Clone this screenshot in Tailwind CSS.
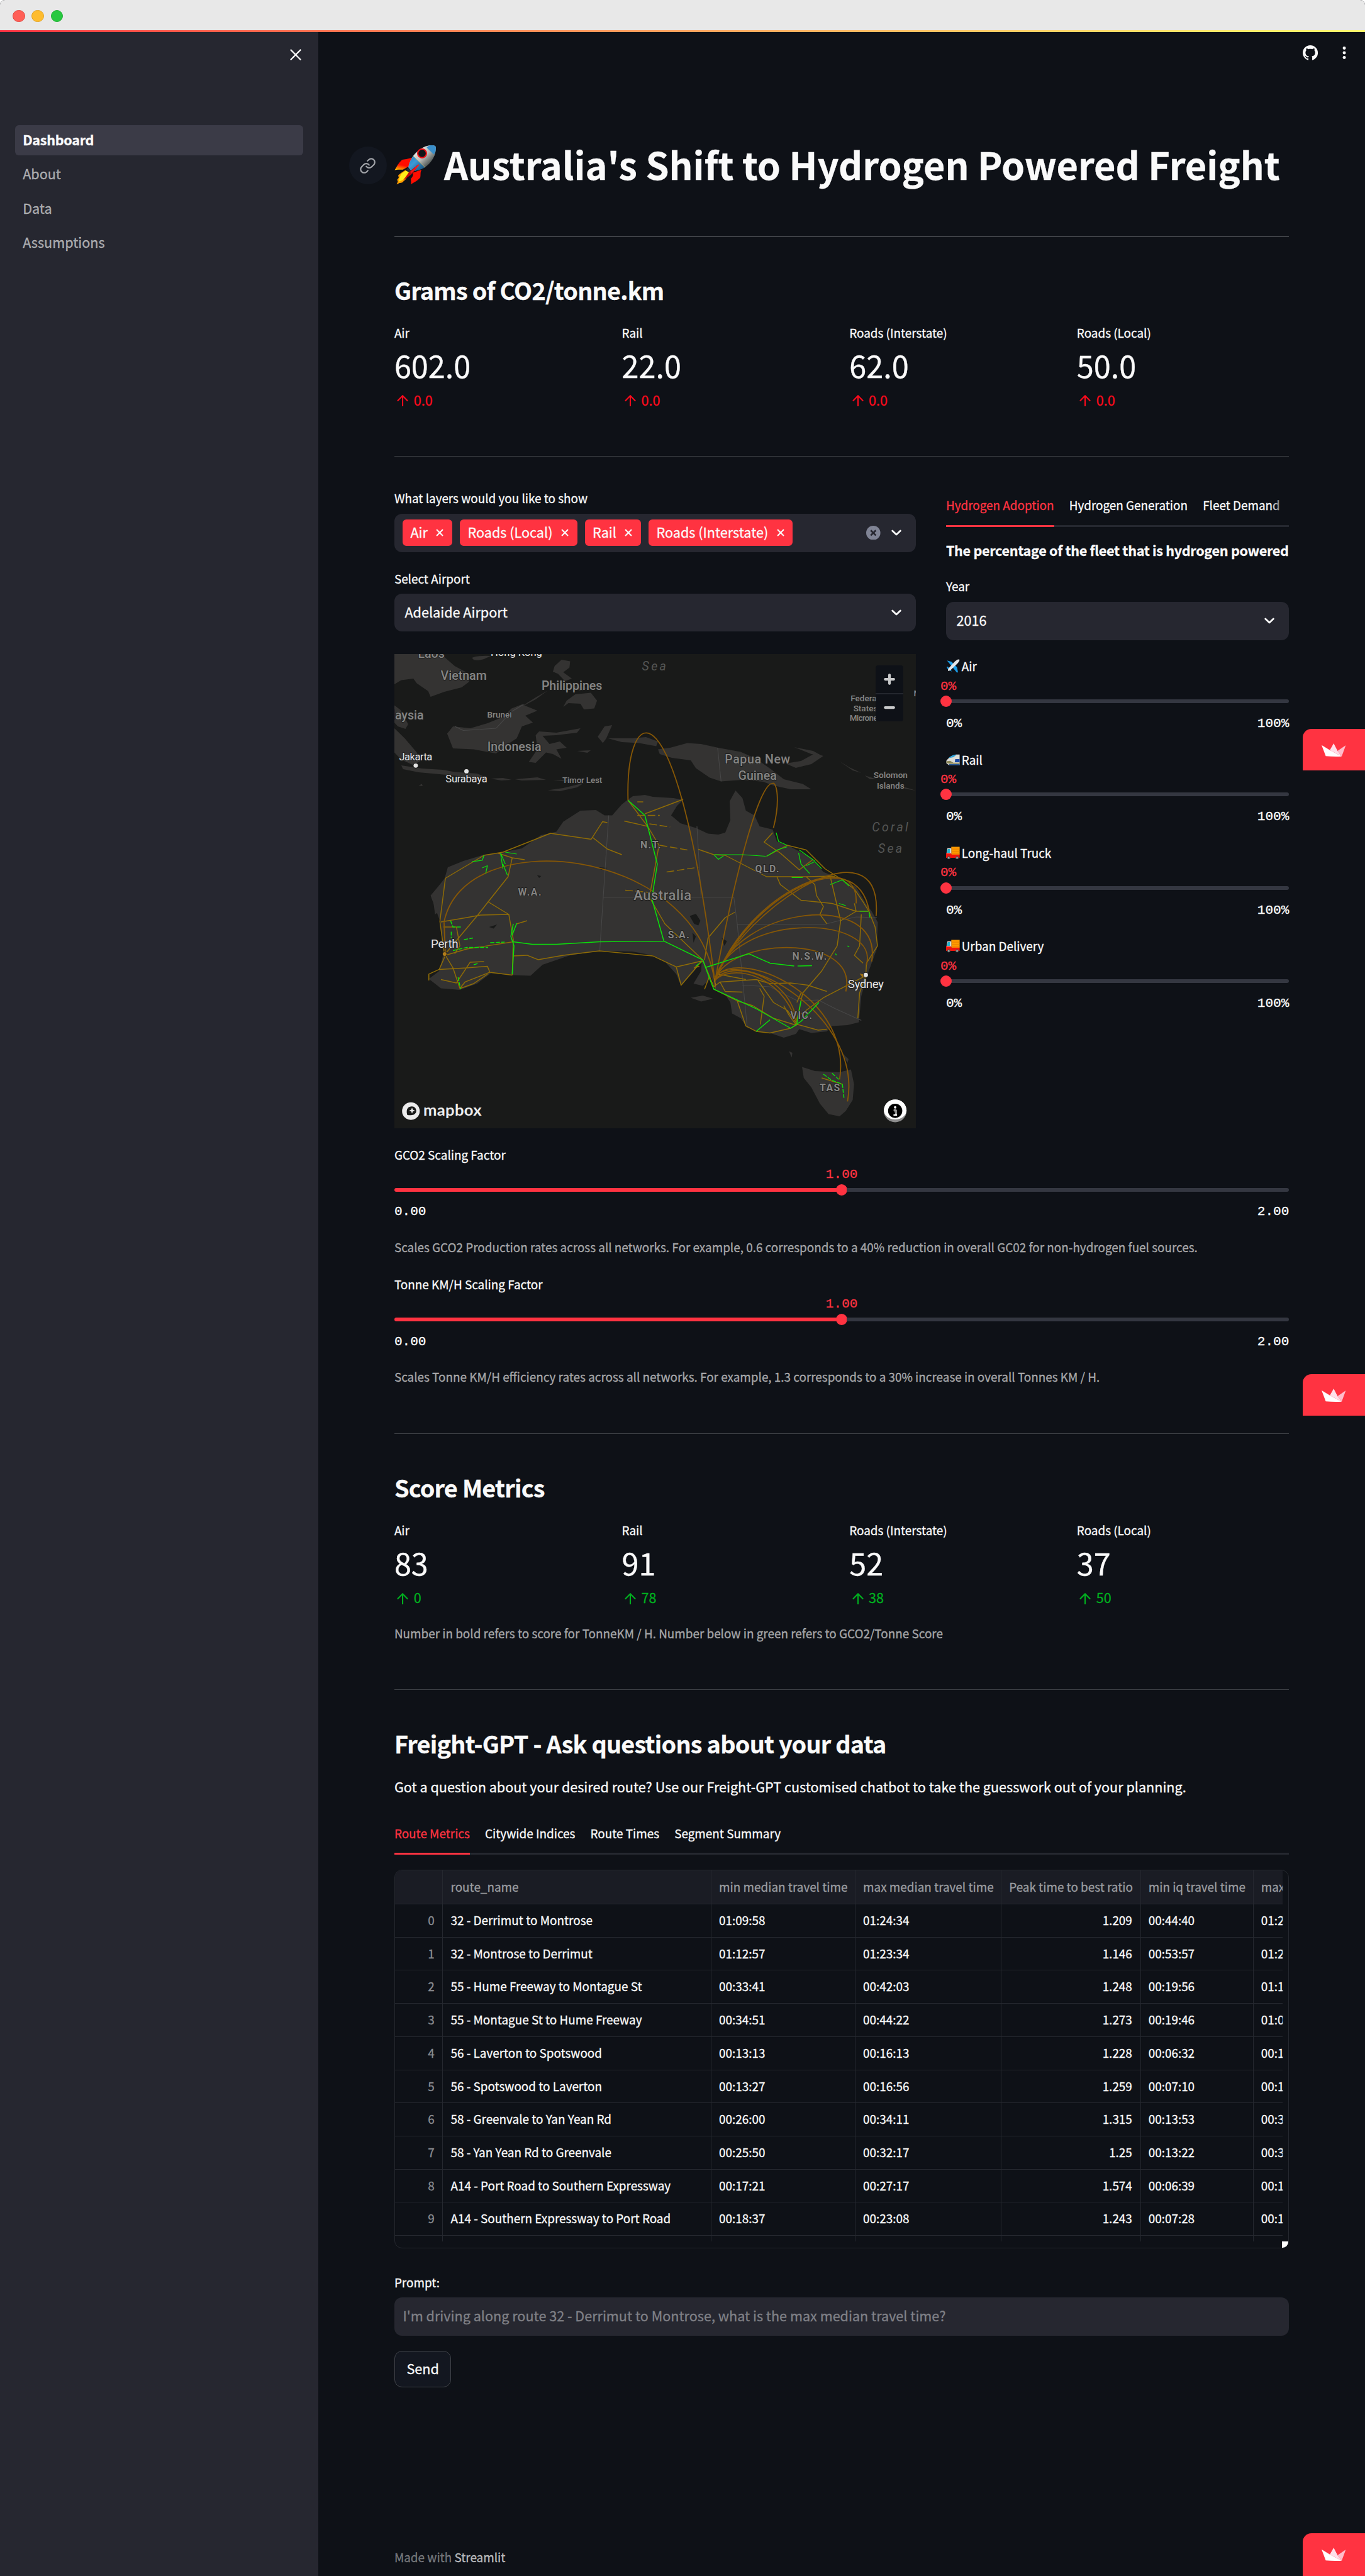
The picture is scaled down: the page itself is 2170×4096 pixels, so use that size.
<!DOCTYPE html>
<html lang="en" class="[--spacing:1.50694px]">
<head>
<meta charset="utf-8">
<title>Australia's Shift to Hydrogen Powered Freight</title>
<script src="https://cdn.jsdelivr.net/npm/@tailwindcss/browser@4"></script>
</head>
<body class="w-[2170px] h-[4096px] overflow-hidden bg-white font-['Noto_Sans_CJK_SC','Noto_Sans',sans-serif] text-[#fafafa] text-[18.9px] [-webkit-text-stroke:0.3px]">
<svg class="hidden">
  <symbol id="arrow" viewBox="0 0 12 12"><path d="M6 11.6V.9M1 6L6 .9l5 5.1" fill="none" stroke="currentColor" stroke-width="1.4" stroke-linecap="round" stroke-linejoin="round"/></symbol>
  <symbol id="chev" viewBox="0 0 12 8"><path d="M1.8 2L6 6l4.200-4" fill="none" stroke="#fafafa" stroke-width="1.9" stroke-linecap="round" stroke-linejoin="round"/></symbol>
  <symbol id="x" viewBox="0 0 8 8"><path d="M.7.7l6.600 6.600M7.300.7L.7 7.300" fill="none" stroke="#fafafa" stroke-width="1.4"/></symbol>
  <symbol id="crown" viewBox="0 0 25.600 14"><path d="M0 1.800L8.750 7.100 21.300 13.800Q13 14.200 4.400 13.500Z" fill="#fff"/><path d="M12.800 0L8.750 7.100 21.300 13.800 16.900 8Z" fill="#ffe0ea"/><path d="M25.600 2L16.900 8 21.300 13.800Z" fill="#ffbccb"/></symbol>
  <symbol id="truck" viewBox="0 0 15 15"><rect x="5.700" y="1" width="9.200" height="9" fill="#ff9a00"/><path d="M5.700 3.500h9.200M5.700 6h9.200M5.700 8.300h9.200" stroke="#e07800" stroke-width=".5"/><path d="M.3 9L1.500 2.600h4.200V9Z" fill="#e9e4e0"/><path d="M.9 7.500L1.900 3.500h2.500v4Z" fill="#25b5cf"/><path d="M0 8h5.700v1.500h9.200V13H0Z" fill="#f0140c"/><circle cx="3" cy="13" r="1.700" fill="#555"/><circle cx="12" cy="13" r="1.700" fill="#555"/><circle cx="3" cy="13" r=".7" fill="#ddd"/><circle cx="12" cy="13" r=".7" fill="#ddd"/></symbol>
</svg>

<div class="relative flex h-full w-full flex-col overflow-hidden rounded-t-[8px] bg-[#0e1117]">
  <header class="flex h-32 shrink-0 items-center gap-7 bg-[#e8e8e8] pl-13.5 pt-2">
    <span class="size-13 rounded-full border border-[#e2463f] bg-[#ff5f57]"></span>
    <span class="size-13 rounded-full border border-[#e1a325] bg-[#febc2e]"></span>
    <span class="size-13 rounded-full border border-[#1dad2f] bg-[#28c840]"></span>
  </header>
  <div class="absolute inset-x-0 top-32 z-10 h-2 bg-linear-to-r from-[#ff3142] via-[#ffa25c] to-[#fffb6a]"></div>

  <div class="flex min-h-0 flex-1">
    <aside class="w-336 shrink-0 bg-[#262730]">
      <div class="flex justify-end pr-18 pt-20">
        <svg class="size-12" viewBox="0 0 12 12"><path d="M.6.6l10.800 10.800M11.400.6L.6 11.400" stroke="#fafafa" stroke-width="1.500"/></svg>
      </div>
      <nav class="mx-16 mt-68 flex flex-col gap-4 text-[21.6px] text-[#fafafa]/60">
        <a class="flex h-32 items-center rounded-[6px] bg-[#3b3b47] px-8 pb-1 font-bold tracking-[-0.3px] text-[#fafafa]">Dashboard</a>
        <a class="flex h-32 items-center px-8 pb-1">About</a>
        <a class="flex h-32 items-center px-8 pb-1">Data</a>
        <a class="flex h-32 items-center px-8 pb-1">Assumptions</a>
      </nav>
    </aside>

    <main class="w-1104 shrink-0">
      <div class="flex h-48 items-center justify-end gap-20 pr-14">
        <svg class="size-16" viewBox="0 0 16 16"><path fill="#fafafa" d="M8 0C3.580 0 0 3.580 0 8c0 3.540 2.290 6.530 5.470 7.590.4.070.55-.17.55-.38 0-.19-.01-.82-.01-1.490-2.010.37-2.530-.49-2.690-.94-.09-.23-.48-.94-.82-1.130-.28-.15-.68-.52-.01-.53.63-.01 1.080.58 1.230.82.72 1.210 1.870.87 2.330.66.070-.52.28-.87.51-1.070-1.780-.2-3.640-.89-3.640-3.950 0-.87.31-1.590.82-2.150-.08-.2-.36-1.020.08-2.120 0 0 .67-.21 2.200.82.64-.18 1.320-.27 2-.27s1.360.09 2 .27c1.530-1.040 2.200-.82 2.200-.82.44 1.100.16 1.920.08 2.120.51.56.82 1.270.82 2.150 0 3.070-1.870 3.750-3.650 3.950.29.25.54.73.54 1.480 0 1.070-.01 1.930-.01 2.200 0 .21.15.46.55.38A8.010 8.010 0 0016 8c0-4.420-3.580-8-8-8z"/></svg>
        <svg class="size-16" viewBox="0 0 16 16" fill="#fafafa"><circle cx="8" cy="3" r="1.650"/><circle cx="8" cy="8" r="1.650"/><circle cx="8" cy="13" r="1.650"/></svg>
      </div>

      <div class="ml-80 w-944">
        <div class="relative mt-66.75 flex h-52 gap-8.5">
          <div class="absolute -left-48 top-8 flex size-40 items-center justify-center rounded-full bg-[#131720]">
            <svg class="size-18" viewBox="0 0 24 24" fill="none" stroke="#a3a5aa" stroke-width="1.900" stroke-linecap="round" stroke-linejoin="round"><path d="M10 13a5 5 0 0 0 7.540.54l3-3a5 5 0 0 0-7.070-7.070l-1.720 1.710"/><path d="M14 11a5 5 0 0 0-7.540-.54l-3 3a5 5 0 0 0 7.070 7.070l1.710-1.710"/></svg>
          </div>
          <svg class="mt-6 size-44" viewBox="0 0 44 44">
            <defs>
              <linearGradient id="rk" x1=".2" y1=".2" x2=".75" y2=".75"><stop offset="0" stop-color="#f4f4f0"/><stop offset=".55" stop-color="#b9bcb8"/><stop offset="1" stop-color="#4b5250"/></linearGradient>
              <linearGradient id="bl" x1="0" y1="0" x2="1" y2="1"><stop offset="0" stop-color="#1d7fc0"/><stop offset=".4" stop-color="#3d9ad6"/><stop offset="1" stop-color="#0d3f66"/></linearGradient>
              <linearGradient id="fn" x1=".6" y1="0" x2=".3" y2="1"><stop offset=".6" stop-color="#ff0d00"/><stop offset="1" stop-color="#ffb300"/></linearGradient>
            </defs>
            <path d="M18.500 13.600C14 15.500 11 15.300 8.200 15.900 4.500 19 2.500 23 .3 26.900 3.500 26 6 26.600 9 26.400L15 23Z" fill="url(#fn)"/>
            <path d="M19.800 29.500L28.700 26.400C27 29.500 28 31 27.300 34.750 24 38.500 20.500 40 17.300 41.900 18 39.500 17.300 38 17.300 35.900 19.500 34 19.800 32 19.800 29.500Z" fill="#ff0d00"/>
            <path d="M11.500 26.900L6.800 30 4 32.300 4.600 35 2.900 37 3.600 39 2.300 41.900 5 40.700 8.200 40 12 36.500 16.200 30Z" fill="#ff9d00"/>
            <path d="M12 27.400L7 31 5.300 35.500 4.600 39 8.500 37.500 12.500 33.500 15.800 29.500Z" fill="#ffee1a"/>
            <path d="M14.300 24.200L18.500 28.200 16 30 12.500 26.500Z" fill="#1f3038"/>
            <path d="M38.200.6C32 1 24.500 5.500 19.800 11.900 17.500 15.500 15.500 19.500 14.800 23.900L18.200 28.100C23.500 27.500 28 26.500 32.300 23.900 37 20.500 40.500 16 42.300 11.400 43.500 8 44 5 43.600 2.200 43 .8 41 .5 38.200.6Z" fill="url(#rk)"/>
            <path d="M19.800 11.900C17.500 15.500 15.500 19.500 14.800 23.900L18.200 28.100C23.500 27.500 28 26.500 32.300 23.900Z" fill="url(#bl)"/>
            <path d="M38.200.6C36.500.8 35 1.700 34 3.100L41.500 10.300C43.500 8 44 5 43.600 2.200 43 .8 41 .5 38.200.6Z" fill="#3a8fca"/>
            <path d="M19.800 11.900L32.300 23.900" stroke="#d9b95c" stroke-width=".5"/>
            <circle cx="29.200" cy="9.250" r="5.300" fill="#ee0f14"/><circle cx="29.200" cy="9.250" r="3.900" fill="#101416"/>
            <path d="M25.900 21.200L24.300 21.600 15.500 28.800 9.300 37.800 19 30.500Z" fill="#c2070c"/><path d="M25.900 21.200L17.500 29.500" stroke="#ff1c1c" stroke-width="1.200"/>
          </svg>
          <h1 class="whitespace-nowrap text-[59.37px] font-bold leading-[78px]">Australia's Shift to Hydrogen Powered Freight</h1>
        </div>
        <div class="mt-50.25 h-1 bg-[#3d4045]"></div>

        <h2 class="mt-38.75 h-34 text-[37.78px] font-bold leading-[51px] tracking-[-0.75px]">Grams of CO2/tonne.km</h2>
        <div class="mt-17.25 grid grid-cols-4 gap-16">
          <div><div class="h-22 leading-[33px]">Air</div><div class="mt-0.75 h-44 text-[48.6px] leading-[66px]">602.0</div><div class="mt-3.25 flex h-24 items-center pl-3 text-[21.6px] leading-[36px] text-[#ff0a1c]"><svg class="mr-5.5 mt-2 size-12"><use href="#arrow"/></svg>0.0</div></div>
          <div><div class="h-22 leading-[33px]">Rail</div><div class="mt-0.75 h-44 text-[48.6px] leading-[66px]">22.0</div><div class="mt-3.25 flex h-24 items-center pl-3 text-[21.6px] leading-[36px] text-[#ff0a1c]"><svg class="mr-5.5 mt-2 size-12"><use href="#arrow"/></svg>0.0</div></div>
          <div><div class="h-22 leading-[33px]">Roads (Interstate)</div><div class="mt-0.75 h-44 text-[48.6px] leading-[66px]">62.0</div><div class="mt-3.25 flex h-24 items-center pl-3 text-[21.6px] leading-[36px] text-[#ff0a1c]"><svg class="mr-5.5 mt-2 size-12"><use href="#arrow"/></svg>0.0</div></div>
          <div><div class="h-22 leading-[33px]">Roads (Local)</div><div class="mt-0.75 h-44 text-[48.6px] leading-[66px]">50.0</div><div class="mt-3.25 flex h-24 items-center pl-3 text-[21.6px] leading-[36px] text-[#ff0a1c]"><svg class="mr-5.5 mt-2 size-12"><use href="#arrow"/></svg>0.0</div></div>
        </div>
        <div class="mt-47 h-1 bg-[#3d4045]"></div>

        <div class="flex gap-32">
          <section class="w-550 shrink-0">
            <div class="mt-32.5 h-22 leading-[33px]">What layers would you like to show</div>
            <div class="mt-5.5 flex h-40.5 items-center rounded-[12px] bg-[#262730] pl-8.75 text-[21.6px]">
              <div class="flex gap-8">
                <span class="flex h-28 items-center rounded-[6px] bg-[#ff3341] pl-8.25 pr-9"><span class="-mt-1.5 mr-9">Air</span><svg class="size-8"><use href="#x"/></svg></span>
                <span class="flex h-28 items-center rounded-[6px] bg-[#ff3341] pl-8.25 pr-9"><span class="-mt-1.5 mr-9">Roads (Local)</span><svg class="size-8"><use href="#x"/></svg></span>
                <span class="flex h-28 items-center rounded-[6px] bg-[#ff3341] pl-8.25 pr-9"><span class="-mt-1.5 mr-9">Rail</span><svg class="size-8"><use href="#x"/></svg></span>
                <span class="flex h-28 items-center rounded-[6px] bg-[#ff3341] pl-8.25 pr-9"><span class="-mt-1.5 mr-9">Roads (Interstate)</span><svg class="size-8"><use href="#x"/></svg></span>
              </div>
              <svg class="ml-auto size-15" viewBox="0 0 15 15"><circle cx="7.500" cy="7.500" r="7.500" fill="#808495"/><path d="M4.800 4.800l5.400 5.400M10.200 4.800l-5.400 5.400" stroke="#262730" stroke-width="1.800"/></svg>
              <svg class="ml-10.5 mr-14.5 h-8 w-12"><use href="#chev"/></svg>
            </div>
            <div class="mt-16.5 h-22 leading-[33px]">Select Airport</div>
            <div class="mt-5.5 flex h-40 items-center justify-between rounded-[12px] bg-[#262730] pl-11 pr-14.5 text-[21.6px]"><span class="-mt-1.5">Adelaide Airport</span><svg class="h-8 w-12"><use href="#chev"/></svg></div>

            <div class="relative mt-24 h-500 w-550 overflow-hidden bg-[#191a19]">
              <svg class="absolute inset-0 h-full w-full" viewBox="30 32 1513 1507" preserveAspectRatio="none">
                <g fill="#343332">
                  <path d="M30 32H165L205 70 242 92 247 120 225 138 175 152 135 168 128 150 95 125 85 110 50 115 30 128Z"/>
                  <path d="M255 44Q270 36 310 38L290 48Q268 54 260 50Z"/>
                  <path d="M495 70L515 50 540 55 538 75 520 90 545 110 525 118 505 95 490 88ZM555 160L600 155 618 180 610 205 580 208 570 190 535 188 520 200 530 180ZM540 130L560 135 590 140 570 150ZM385 208L440 170 475 148 440 176Z"/>
                  <path d="M183 285L200 262 250 268 300 252 345 232 370 205 400 192 445 212 410 228 432 250 400 262 385 300 360 318 325 348 260 335 200 332Z"/>
                  <path d="M440 290L450 278 500 282 570 268 560 282 500 290 460 292 480 318 510 310 530 330 500 335 515 365 490 350 470 345 440 378 420 375 445 335Z"/>
                  <path d="M30 268L60 300 95 345 105 372 85 385 50 368 30 345ZM30 195L48 210 70 255 62 270 40 262 30 250Z"/>
                  <path d="M50 386L110 396 170 400 205 407 270 412 300 426 250 424 180 416 100 408 55 398ZM310 428L345 426 370 432 340 434ZM380 430L445 424 470 432 400 434ZM475 465L520 458 580 442 560 456 510 468ZM490 434L550 432 540 438Z"/>
                  <path d="M620 295L640 262 662 258 655 275 645 300 635 315ZM650 300L720 300 760 296 795 310 790 325 740 315 690 312ZM560 340L600 338 590 346Z"/>
                  <path d="M795 335L830 330 880 315 920 318 970 330 1035 343 1080 365 1125 400 1160 430 1215 445 1240 462 1180 462 1130 450 1100 438 1040 432 978 437 945 425 905 395 890 370 835 362 800 350Z"/>
                  <path d="M1165 380L1210 372 1250 348 1275 356 1240 382 1195 394ZM1190 328L1245 340 1270 355 1240 350ZM1320 372L1350 392 1385 410 1360 402ZM1395 418L1430 430 1410 430ZM1490 450L1520 458 1543 466 1510 460ZM100 450L110 445 112 452Z"/>
                  <path d="M705 497L722 484 757 480 780 486 840 490 868 496 850 515 833 545 860 570 905 585 940 603 970 606 990 600 1005 560 1003 500 1020 466 1040 490 1050 530 1075 545 1090 580 1128 590 1140 628 1180 645 1240 680 1275 725 1320 745 1370 772 1398 825 1415 850 1433 885 1430 970 1415 1015 1400 1060 1385 1120 1378 1203 1345 1212 1300 1215 1285 1232 1240 1237 1205 1225 1195 1240 1160 1252 1120 1237 1080 1232 1050 1215 1035 1190 1010 1175 1005 1140 990 1115 960 1100 950 1060 925 1087 898 1080 920 1040 922 1008 900 1040 862 1087 848 1050 815 1010 780 990 720 978 625 976 540 990 460 1020 425 1055 372 1053 310 1047 270 1080 220 1100 165 1095 130 1065 160 1040 172 985 162 880 135 800 158 770 176 745 185 710 230 690 290 670 330 665 400 650 455 608 500 597 520 565 570 530 615 528 640 545 662 545 690 510Z"/>
                  <path d="M1213 1345L1250 1358 1320 1362 1355 1353 1364 1400 1360 1450 1340 1485 1322 1502 1290 1495 1265 1462 1240 1410 1218 1380ZM890 1125L925 1118 955 1128 920 1137ZM1330 1302L1348 1320 1345 1332ZM1175 1295L1185 1300 1183 1315ZM140 795L160 850 148 860Z"/>
                </g>
                <path d="M887 865L905 858 918 880 912 895 900 890ZM980 935L995 945 988 960ZM622 710L648 712 630 718ZM305 900L328 892 318 905ZM444 735L456 738 450 744ZM895 918L905 930 898 950Z" fill="#191a19"/>
                <g fill="none" stroke="#474747" stroke-width="2"><path d="M652 545L636 805 626 976M636 805H1015L1025 891 1054 1220M908 580L920 805M1025 891H1280L1320 880 1370 868 1430 870M1040 1085L1120 1090 1200 1135 1260 1132 1310 1160 1385 1197M968 330L978 437M205 262L230 275 325 268 370 215 405 192"/></g>
                <g fill="none" stroke="#8f6c06" stroke-width="2.800" stroke-linejoin="round">
                  <path d="M178 745L162 882 175 985M178 745L290 672 345 662 483 602 601 621 634 565 648 568M605 615L648 652 690 670M330 665L372 680 360 740 302 820 272 862 178 985M165 884L240 870 280 862 362 860 375 940 372 1053M372 680L408 686M302 820L362 860M375 947L240 970 178 990 160 1035 130 1050V1070M160 1035L240 1030 300 1025 307 1044 372 1053M178 990L200 1030 220 1095 235 1075 307 1044M222 1095L260 1080 300 1050M165 1067L210 1078 250 1012 290 1010M172 900L210 900 220 960 205 985M375 992L415 990 447 1004 520 990 625 976 780 992 848 1027 862 1085 922 1008 848 1027M385 890L415 880"/>
                  <path d="M708 497L765 580 697 563M757 540L868 494M765 580L798 640 770 805 815 890 925 1005"/>
                  <path d="M1128 600L1103 630 1150 665 1205 718 1245 685M912 653L957 670 990 672 1110 740H1225L1310 738M1110 675L1170 640 1225 655 1280 715 1330 750 1365 780 1390 820 1407 850M1140 740L1150 765 1210 815 1300 825 1370 850 1405 850M1295 740L1325 880 1315 960 1270 1040 1215 1110 1195 1210M1225 740L1250 765 1255 800 1275 835 1265 860 1285 890M1370 850L1325 880M1407 850L1425 900 1432 960 1400 1015 1398 1055 1380 1110 1375 1190M1385 860L1380 960 1365 990 1390 1015M1398 1055L1275 1125 1200 1185M1365 825L1370 850"/>
                  <path d="M1018 853L990 870 940 935 930 1005M925 1005L957 1090 975 1075 1080 1067 1120 1080 1180 1078 1230 1085 1285 1105M957 1098L1025 1135 1070 1150 1130 1190 1195 1212M1025 1135L1050 1215 1080 1232 1120 1237 1180 1222 1200 1210 1260 1228 1285 1225M1090 1095L1103 1120 1092 1210M1085 1070L1130 1140 1170 1165 1198 1208M975 1075L990 1105 1040 1107M970 1050L1050 1067M925 1008L900 1030 915 1025M943 1060L930 1098M1270 1380L1330 1400M1195 1210L1175 1180 1160 1150M1210 1110L1198 1140"/>
                  <path d="M735 502H752M735 545H800M770 572L830 582M800 640L880 655M820 725L912 710M700 783L770 790" stroke-dasharray="22 8"/>
                </g>
                <g fill="none" stroke="#865706" stroke-width="3.400">
                  <path d="M708 497C700 180 850 100 960 1075"/><path d="M1130 585C1150 500 1140 440 1128 443C1090 440 1020 720 960 1075"/>
                  <path d="M174 885C230 570 900 640 960 1075" /><path d="M960 1070C1060 800 1370 620 1408 850"/><path d="M960 1070C1040 840 1450 550 1428 865"/><path d="M960 1070C1060 780 1380 640 1370 825"/><path d="M960 1070C1020 830 1450 780 1415 1010"/><path d="M960 1070C1010 850 1440 860 1400 1020"/><path d="M960 1070C1000 930 1380 920 1340 1105"/><path d="M960 1070C1000 1000 1180 1050 1198 1205"/><path d="M960 1070C1000 1020 1150 1040 1198 1205"/><path d="M960 1060C1030 960 1360 1120 1322 1385"/><path d="M960 1060C1030 960 1390 1180 1345 1455"/><path d="M174 885L178 985"/>
                </g>
                <path d="M178 975l4 8 0 10-8 3-3-8zM1380 1048l18 4-10 8zM957 1060l6 20-2 20z" fill="#a07010"/>
                <g fill="none" stroke="#0be00b" stroke-width="2.800" stroke-linejoin="round">
                  <path d="M708 497L757 545 793 700 777 810 812 945 925 1005M812 945L625 947 500 955 430 955 375 947M375 890L368 930 377 960 372 1050M925 1005L945 1065 957 1098 1080 1160 1180 1222 1210 1200 1262 1140M1080 1232L1120 1195M935 1028L1058 985M1058 985L1120 1015 1190 1024M1200 1024L1242 1023M1198 1205L1210 1135M385 888L372 925"/>
                  <path d="M338 665L345 715M338 665L352 700M352 662L385 668M290 672L285 688 255 692M285 712L300 705 295 730M345 700L358 735M960 670H1040L1108 675M957 670L970 685 985 674M1138 600L1145 628 1170 640M1110 675L1140 655 1170 645M1205 655L1250 690M1203 665L1210 700 1235 730M1225 705L1250 692 1270 715M1183 743H1215M1295 765L1330 750 1350 770M1407 850L1410 870M1320 825L1340 832M1380 850H1405" stroke-width="2.300"/>
                  <path d="M193 880L200 900 226 900M195 915V935M232 940L258 935M200 975L240 965 302 965M308 950L350 948M215 1060L222 1098M260 1020L275 1015M905 1025L920 1010M1275 1368L1300 1388 1330 1400 1335 1447M1300 1365L1320 1385M1310 985L1313 990M1345 960L1350 963" stroke-dasharray="12 4"/>
                </g>
              </svg>
              <svg class="absolute inset-0 h-full w-full font-[Roboto,sans-serif] font-medium" viewBox="0 0 550 500" text-anchor="middle" fill="#858584" paint-order="stroke" stroke="#1d1d1c" stroke-width="1.200" stroke-linejoin="round">
                <g font-size="13">
                  <text x="38.900" y="4.300">Laos</text><text x="73.100" y="26.900">Vietnam</text><text x="187.200" y="37.800" textLength="64">Philippines</text><text x="30.900" y="69.300" text-anchor="end">Malaysia</text><text x="126.500" y="102.100" textLength="57">Indonesia</text><text x="383" y="115.700" textLength="69">Papua New</text><text x="383" y="132.600">Guinea</text><text x="282.800" y="259.500" font-size="14.500" textLength="61">Australia</text>
                </g>
                <g font-size="9">
                  <text x="110.900" y="67.300">Brunei</text><text x="198.100" y="136" textLength="42">Timor Lest</text><text x="523.500" y="131">Solomon</text><text x="523.500" y="142">Islands</text><text x="481.300" y="49.700" text-anchor="start">Federated</text><text x="484.200" y="60.400" text-anchor="start">States of</text><text x="480.200" y="70.600" text-anchor="start" textLength="40">Micronesia</text><text x="547.800" y="44.400" text-anchor="start">Marshall</text>
                </g>
                <g font-size="10.500" letter-spacing="1" font-weight="700">
                  <text x="270.800" y="205.300">N.T.</text><text x="393.700" y="230.500">QLD.</text><text x="143.200" y="255">W.A.</text><text x="300.300" y="299.800">S.A.</text><text x="438.400" y="322.600">N.S.W.</text><text x="429.700" y="385">VIC.</text><text x="459.800" y="461.300">TAS</text>
                </g>
                <g font-size="13" font-style="italic" font-weight="400" letter-spacing="2.200" fill="#545554" stroke="none">
                  <text x="275" y="17.200">Sea</text><text x="524" y="187">Coral</text><text x="524" y="210">Sea</text>
                </g>
                <g font-size="11" font-weight="400" fill="#e4e4e4">
                  <text x="128.700" y="2">Hong Kong</text><text x="22.500" y="112" textLength="35">Jakarta</text><text x="76" y="135.600" textLength="44">Surabaya</text><text x="53" y="309.700" font-size="12.500" textLength="29">Perth</text><text x="497.300" y="352.500" font-size="12.500" textLength="38">Sydney</text>
                  <circle cx="22.500" cy="117.700" r="2.300"/><circle cx="76" cy="123.700" r="2.300"/><circle cx="497.300" cy="338.600" r="2.300"/><circle cx="53" cy="316.500" r="2" fill="#b07c1a"/>
                </g>
                <g stroke="none">
                  <circle cx="17.400" cy="482.200" r="9.300" fill="#ececec"/><path d="M13.500 486.200C11.800 479.500 15 477.300 18.500 477.300A4.600 4.600 0 1 1 18.500 486.500C16.500 486.800 15 486.600 13.500 486.200Z" fill="#191a19"/><path d="M18.600 478.600l.9 2.200 2.200.9-2.200.9-.9 2.200-.9-2.200-2.200-.9 2.200-.9z" fill="#ececec"/>
                  <text x="30.500" y="487" text-anchor="start" font-family="Lato, sans-serif" font-weight="700" font-size="17" textLength="61.500" fill="#ececec">mapbox</text>
                  <rect x="516.300" y="470" width="24" height="24" rx="12" fill="#8c8c8c"/><path d="M516.300 481.500a12 11.500 0 0 1 24 0 12 9.500 0 0 1-24 0z" fill="#fff"/><circle cx="528.300" cy="482" r="7.500" fill="#000"/><circle cx="528.300" cy="478.300" r="1.300" fill="#fff"/><path d="M526.700 481.300h2.400v5M526.500 486.300h3.800" stroke="#fff" stroke-width="1.500"/>
                </g>
              </svg>
              <div class="absolute right-13 top-12 flex w-29 flex-col rounded-[4px] bg-[#0e1117]">
                <div class="flex h-29 items-center justify-center"><svg class="size-12" viewBox="0 0 12 12"><path d="M6 1.500v9M1.500 6h9" stroke="#c9cacb" stroke-width="2.800" stroke-linecap="round"/></svg></div>
                <div class="h-1 bg-[#24272e]"></div>
                <div class="flex h-28.5 items-center justify-center"><svg class="size-12" viewBox="0 0 12 12"><path d="M1.500 6h9" stroke="#c9cacb" stroke-width="2.800" stroke-linecap="round"/></svg></div>
              </div>
            </div>
          </section>

          <section class="w-362 shrink-0">
            <div class="relative mt-39.75 h-32.25">
              <div class="flex gap-16 whitespace-nowrap leading-[33px]"><span class="text-[#ff3341]">Hydrogen Adoption</span><span>Hydrogen Generation</span><span>Fleet Demand</span></div>
              <div class="absolute right-0 top-0 h-24 w-20 bg-linear-to-r from-[#0e1117]/0 to-[#0e1117]"></div>
            </div>
            <div class="h-2 bg-[#252830]"><div class="h-2 w-114 bg-[#ff3341]"></div></div>
            <div class="mt-12 h-25.5 whitespace-nowrap text-[21.6px] font-bold leading-[38px] tracking-[-0.31px]">The percentage of the fleet that is hydrogen powered</div>
            <div class="mt-13.75 h-22 leading-[33px]">Year</div>
            <div class="mt-5.75 flex h-40.5 items-center justify-between rounded-[12px] bg-[#262730] pl-11 pr-14.5 text-[21.6px]"><span class="-mt-1.5">2016</span><svg class="h-8 w-12"><use href="#chev"/></svg></div>
            <div class="mt-16.25 flex flex-col gap-17.5">
              <div>
                <div class="flex h-22 items-center gap-2 leading-[33px]"><svg class="size-14.5" viewBox="0 0 15 15"><path d="M1 1.500L6 3 12 9 13 14.500 11.800 14.700 7.500 9.500ZM.5 8.500L2 8.200 6.500 13.500 3.800 12.500 2.300 11.500Z" fill="#1a9be6"/><path d="M14.500.5C13 0 10.500 1.500 8.500 3.800L3.200 9.600C2.200 10.800 1.800 12.200 2.200 12.700S4 12.600 5.300 11.600L11 6.200C13.300 4 15.200 1.500 14.500.5Z" fill="#e4e6e8"/></svg><span>Air</span></div>
                <div class="-ml-6 mt-1.5 h-18 font-['Liberation_Mono',monospace] text-[21.1px] leading-[27px] text-[#ff3341]">0%</div>
                <div class="mt-0.75 -ml-6 flex h-12 items-center"><div class="z-1 size-12 shrink-0 rounded-full bg-[#ff3341]"></div><div class="-ml-2 h-4 flex-1 rounded-r-full bg-[#343741]"></div></div>
                <div class="mt-8.75 flex h-18 justify-between font-['Liberation_Mono',monospace] text-[21.1px] leading-[27px]"><span>0%</span><span>100%</span></div>
              </div>
              <div>
                <div class="flex h-22 items-center gap-2 leading-[33px]"><svg class="size-14.5" viewBox="0 0 15 15"><path d="M14.800 2.500H11C7 2.800 2 6.500.3 9.500V12L3 14H14.800Z" fill="#dcdcd6"/><path d="M11 2.500C7 2.800 4 5 2.500 6.600L8 5.500 11.500 2.700Z" fill="#2fa3d8"/><path d="M10 7.500H14.800V11H9.500Z" fill="#1a4aa5"/><path d="M.3 10L4.500 9.500 8 11.500H14.800V12.700H4L.4 11.700Z" fill="#8a8658"/><path d="M3 13H14.800V14.500H4Z" fill="#2c5a96"/></svg><span>Rail</span></div>
                <div class="-ml-6 mt-1.5 h-18 font-['Liberation_Mono',monospace] text-[21.1px] leading-[27px] text-[#ff3341]">0%</div>
                <div class="mt-0.75 -ml-6 flex h-12 items-center"><div class="z-1 size-12 shrink-0 rounded-full bg-[#ff3341]"></div><div class="-ml-2 h-4 flex-1 rounded-r-full bg-[#343741]"></div></div>
                <div class="mt-8.75 flex h-18 justify-between font-['Liberation_Mono',monospace] text-[21.1px] leading-[27px]"><span>0%</span><span>100%</span></div>
              </div>
              <div>
                <div class="flex h-22 items-center gap-2 leading-[33px]"><svg class="size-14.5"><use href="#truck"/></svg><span>Long-haul Truck</span></div>
                <div class="-ml-6 mt-1.5 h-18 font-['Liberation_Mono',monospace] text-[21.1px] leading-[27px] text-[#ff3341]">0%</div>
                <div class="mt-0.75 -ml-6 flex h-12 items-center"><div class="z-1 size-12 shrink-0 rounded-full bg-[#ff3341]"></div><div class="-ml-2 h-4 flex-1 rounded-r-full bg-[#343741]"></div></div>
                <div class="mt-8.75 flex h-18 justify-between font-['Liberation_Mono',monospace] text-[21.1px] leading-[27px]"><span>0%</span><span>100%</span></div>
              </div>
              <div>
                <div class="flex h-22 items-center gap-2 leading-[33px]"><svg class="size-14.5"><use href="#truck"/></svg><span>Urban Delivery</span></div>
                <div class="-ml-6 mt-1.5 h-18 font-['Liberation_Mono',monospace] text-[21.1px] leading-[27px] text-[#ff3341]">0%</div>
                <div class="mt-0.75 -ml-6 flex h-12 items-center"><div class="z-1 size-12 shrink-0 rounded-full bg-[#ff3341]"></div><div class="-ml-2 h-4 flex-1 rounded-r-full bg-[#343741]"></div></div>
                <div class="mt-8.75 flex h-18 justify-between font-['Liberation_Mono',monospace] text-[21.1px] leading-[27px]"><span>0%</span><span>100%</span></div>
              </div>
            </div>
          </section>
        </div>

        <div class="mt-16.5 h-22 leading-[33px]">GCO2 Scaling Factor</div>
        <div class="mt-1.75 h-18 text-center font-['Liberation_Mono',monospace] text-[21.1px] leading-[27px] text-[#ff3341]">1.00</div>
        <div class="mt-0.75 flex h-12 items-center"><div class="h-4 flex-1 rounded-l-full bg-[#ff3341]"></div><div class="-mx-1 size-12 rounded-full bg-[#ff3341]"></div><div class="h-4 flex-1 rounded-r-full bg-[#343741]"></div></div>
        <div class="mt-8.25 flex h-18 justify-between font-['Liberation_Mono',monospace] text-[21.1px] leading-[27px]"><span>0.00</span><span>2.00</span></div>
        <div class="mt-16.75 h-22 leading-[33px] text-[#fafafa]/60">Scales GCO2 Production rates across all networks. For example, 0.6 corresponds to a 40% reduction in overall GC02 for non-hydrogen fuel sources.</div>

        <div class="mt-17.25 h-22 leading-[33px]">Tonne KM/H Scaling Factor</div>
        <div class="mt-1.75 h-18 text-center font-['Liberation_Mono',monospace] text-[21.1px] leading-[27px] text-[#ff3341]">1.00</div>
        <div class="mt-0.75 flex h-12 items-center"><div class="h-4 flex-1 rounded-l-full bg-[#ff3341]"></div><div class="-mx-1 size-12 rounded-full bg-[#ff3341]"></div><div class="h-4 flex-1 rounded-r-full bg-[#343741]"></div></div>
        <div class="mt-8.5 flex h-18 justify-between font-['Liberation_Mono',monospace] text-[21.1px] leading-[27px]"><span>0.00</span><span>2.00</span></div>
        <div class="mt-16.75 h-22 leading-[33px] text-[#fafafa]/60">Scales Tonne KM/H efficiency rates across all networks. For example, 1.3 corresponds to a 30% increase in overall Tonnes KM / H.</div>
        <div class="mt-49 h-1 bg-[#3d4045]"></div>

        <h2 class="mt-38.75 h-34 text-[37.78px] font-bold leading-[51px] tracking-[-0.75px]">Score Metrics</h2>
        <div class="mt-17.25 grid grid-cols-4 gap-16">
          <div><div class="h-22 leading-[33px]">Air</div><div class="mt-1 h-44 text-[48.6px] leading-[66px]">83</div><div class="mt-3.5 flex h-24 items-center pl-3 text-[21.6px] leading-[36px] text-[#00b01f]"><svg class="mr-5.5 mt-2 size-12"><use href="#arrow"/></svg>0</div></div>
          <div><div class="h-22 leading-[33px]">Rail</div><div class="mt-1 h-44 text-[48.6px] leading-[66px]">91</div><div class="mt-3.5 flex h-24 items-center pl-3 text-[21.6px] leading-[36px] text-[#00b01f]"><svg class="mr-5.5 mt-2 size-12"><use href="#arrow"/></svg>78</div></div>
          <div><div class="h-22 leading-[33px]">Roads (Interstate)</div><div class="mt-1 h-44 text-[48.6px] leading-[66px]">52</div><div class="mt-3.5 flex h-24 items-center pl-3 text-[21.6px] leading-[36px] text-[#00b01f]"><svg class="mr-5.5 mt-2 size-12"><use href="#arrow"/></svg>38</div></div>
          <div><div class="h-22 leading-[33px]">Roads (Local)</div><div class="mt-1 h-44 text-[48.6px] leading-[66px]">37</div><div class="mt-3.5 flex h-24 items-center pl-3 text-[21.6px] leading-[36px] text-[#00b01f]"><svg class="mr-5.5 mt-2 size-12"><use href="#arrow"/></svg>50</div></div>
        </div>
        <div class="mt-14.5 h-22 leading-[33px] text-[#fafafa]/60">Number in bold refers to score for TonneKM / H. Number below in green refers to GCO2/Tonne Score</div>
        <div class="mt-48 h-1 bg-[#3d4045]"></div>

        <h2 class="mt-38.75 h-34 text-[37.78px] font-bold leading-[51px] tracking-[-0.75px]">Freight-GPT - Ask questions about your data</h2>
        <p class="mt-16.75 h-25.5 text-[21.6px] leading-[38px]">Got a question about your desired route? Use our Freight-GPT customised chatbot to take the guesswork out of your planning.</p>
        <div class="mt-24.75 flex h-31.75 gap-16 leading-[33px]"><span class="text-[#ff3341]">Route Metrics</span><span>Citywide Indices</span><span>Route Times</span><span>Segment Summary</span></div>
        <div class="h-2 bg-[#252830]"><div class="h-2 w-80 bg-[#ff3341]"></div></div>

        <div class="mt-16 h-400 w-944 rounded-[12px] border border-[#25282f] pb-7 pr-7">
          <div id="grid" class="h-392 w-936.5 overflow-hidden rounded-tl-[11px]"></div>
          <div class="ml-auto -mr-7 h-6.5 w-7 rounded-br-[9px] bg-white"></div>
        </div>

        <div class="mt-24 h-22 leading-[33px]">Prompt:</div>
        <div class="mt-5.5 flex h-40.5 items-center rounded-[12px] bg-[#262730] pl-9 text-[21.6px] text-[#808187]"><span class="-mt-1.5">I'm driving along route 32 - Derrimut to Montrose, what is the max median travel time?</span></div>
        <button class="mt-16 flex h-38.5 w-60 items-center justify-center rounded-[12px] border border-[#41444a] bg-[#131720] text-[21.6px]"><span class="-mt-1.5">Send</span></button>
        <div class="mt-167.75 h-22 leading-[33px] text-[#fafafa]/40">Made with <span class="text-[#fafafa]/70">Streamlit</span></div>
      </div>
    </main>
  </div>

  <div class="absolute right-0 top-769 flex h-44 w-65.5 items-center justify-center rounded-tl-[14px] bg-[#ff3341] pt-1"><svg class="h-14 w-25.5"><use href="#crown"/></svg></div>
  <div class="absolute right-0 top-1450 flex h-44 w-65.5 items-center justify-center rounded-tl-[14px] bg-[#ff3341] pt-1"><svg class="h-14 w-25.5"><use href="#crown"/></svg></div>
  <div class="absolute right-0 top-2673 flex h-45 w-65.5 items-center justify-center rounded-tl-[14px] bg-[#ff3341]"><svg class="h-14 w-25.5"><use href="#crown"/></svg></div>
</div>

<script>
const rows = [
  ["32 - Derrimut to Montrose","01:09:58","01:24:34","1.209","00:44:40","01:22:10"],
  ["32 - Montrose to Derrimut","01:12:57","01:23:34","1.146","00:53:57","01:22:40"],
  ["55 - Hume Freeway to Montague St","00:33:41","00:42:03","1.248","00:19:56","01:12:30"],
  ["55 - Montague St to Hume Freeway","00:34:51","00:44:22","1.273","00:19:46","01:02:20"],
  ["56 - Laverton to Spotswood","00:13:13","00:16:13","1.228","00:06:32","00:12:30"],
  ["56 - Spotswood to Laverton","00:13:27","00:16:56","1.259","00:07:10","00:12:30"],
  ["58 - Greenvale to Yan Yean Rd","00:26:00","00:34:11","1.315","00:13:53","00:32:30"],
  ["58 - Yan Yean Rd to Greenvale","00:25:50","00:32:17","1.25","00:13:22","00:32:30"],
  ["A14 - Port Road to Southern Expressway","00:17:21","00:27:17","1.574","00:06:39","00:12:30"],
  ["A14 - Southern Expressway to Port Road","00:18:37","00:23:08","1.243","00:07:28","00:12:30"],
  ["","","","","",""]
];
const rowCls = "grid h-35 grid-cols-[76.6px_426.6px_228.9px_232.2px_221.5px_179px_150px] leading-[50px]";
const headCls = "grid h-36 grid-cols-[76.6px_426.6px_228.9px_232.2px_221.5px_179px_150px] leading-[52px] bg-[#1a1c24] text-[#9b9ca0]";
const cell = "h-full overflow-hidden whitespace-nowrap border-b border-r border-[#25282f] px-8";
const num = "h-full overflow-hidden whitespace-nowrap border-b border-r border-[#25282f] px-8.5 text-right";
const idx = "h-full overflow-hidden whitespace-nowrap border-b border-r border-[#25282f] px-8.5 text-right text-[#8b8d92]";
const head = ["","route_name","min median travel time","max median travel time","Peak time to best ratio","min iq travel time","max iq travel time"];
document.getElementById("grid").innerHTML =
  `<div class="${headCls}">` + head.map(h => `<div class="${cell}">${h}</div>`).join("") + "</div>" +
  rows.map((r, i) => `<div class="${rowCls}"><div class="${idx}">${i < 10 ? i : ""}</div>` +
    r.map((v, j) => `<div class="${j === 3 ? num : cell}">${v}</div>`).join("") + "</div>").join("");
</script>
</body>
</html>
